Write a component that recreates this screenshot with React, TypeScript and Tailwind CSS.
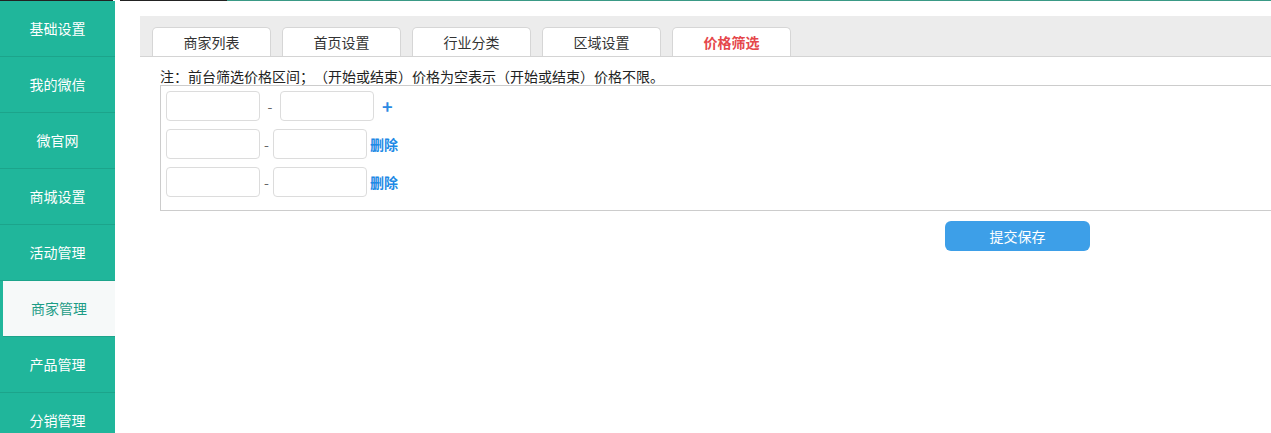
import React from 'react';
import clsx from 'clsx';

const menu = [
  '基础设置',
  '我的微信',
  '微官网',
  '商城设置',
  '活动管理',
  '商家管理',
  '产品管理',
  '分销管理',
];

const tabs = ['商家列表', '首页设置', '行业分类', '区域设置', '价格筛选'];

const PriceInput = () => (
  <input
    type="text"
    className="h-[30px] w-[94px] rounded-[4px] border border-[#dcdcdc] bg-white outline-none"
  />
);

const App: React.FC = () => {
  return (
    <div
      className="flex h-[433px] w-[1271px] flex-col overflow-hidden bg-white text-[14px] text-[#333] [text-spacing-trim:space-all]"
      style={{ fontFamily: '"Microsoft YaHei", "Noto Sans CJK SC", sans-serif' }}
    >
      {/* top strip */}
      <div className="flex h-px shrink-0">
        <div className="w-[113px] bg-[#222]" />
        <div className="w-[7px] bg-white" />
        <div className="w-[107px] bg-[#222]" />
        <div className="flex-1 bg-[#3a9a86]" />
      </div>

      <div className="flex flex-1 overflow-hidden">
        {/* sidebar */}
        <div className="w-[115px] shrink-0 bg-[#20b69b]">
          {menu.map((item) => {
            const active = item === '商家管理';
            return (
              <div
                key={item}
                className={clsx(
                  'flex h-[56px] items-center justify-center border-b border-[#1ca48b]',
                  active ? 'ml-[3px] bg-[#f6f9f9] text-[#1c9c86]' : 'text-white',
                )}
              >
                {item}
              </div>
            );
          })}
        </div>

        {/* main */}
        <div className="flex-1 overflow-hidden pl-[25px] pt-[15px]">
          <div className="flex h-[41px] w-[1300px] items-end gap-[11px] border-b border-[#d4d4d4] bg-[#ececec] pl-[12px]">
            {tabs.map((tab) => {
              const active = tab === '价格筛选';
              return (
                <div
                  key={tab}
                  className={clsx(
                    'flex h-[29px] w-[119px] items-center justify-center rounded-t-[5px] border border-b-0 border-[#d6d6d6] bg-white',
                    active ? 'font-bold text-[#e5474b]' : 'text-[#333]',
                  )}
                >
                  {tab}
                </div>
              );
            })}
          </div>

          <div className="ml-[20px] mt-[10px] leading-[18px] text-[#222]">
            注：前台筛选价格区间；（开始或结束）价格为空表示（开始或结束）价格不限。
          </div>

          <div className="ml-[20px] flex w-[1300px] flex-col gap-[8px] border border-[#cccccc] pb-[13px] pl-[5px] pt-[5px]">
            <div className="flex items-center">
              <PriceInput />
              <span className="w-[20px] text-center text-[#666]">-</span>
              <PriceInput />
              <span className="ml-[8px] text-[18px] font-bold leading-none text-[#2b8ae3]">+</span>
            </div>
            {[0, 1].map((i) => (
              <div key={i} className="flex items-center">
                <PriceInput />
                <span className="w-[13px] text-center text-[#666]">-</span>
                <PriceInput />
                <span className="ml-[3px] font-bold text-[#2089e5]">删除</span>
              </div>
            ))}
          </div>

          <button className="ml-[805px] mt-[10px] h-[30px] w-[145px] rounded-[6px] bg-[#3d9fe8] text-white">
            提交保存
          </button>
        </div>
      </div>
    </div>
  );
};

export default App;
